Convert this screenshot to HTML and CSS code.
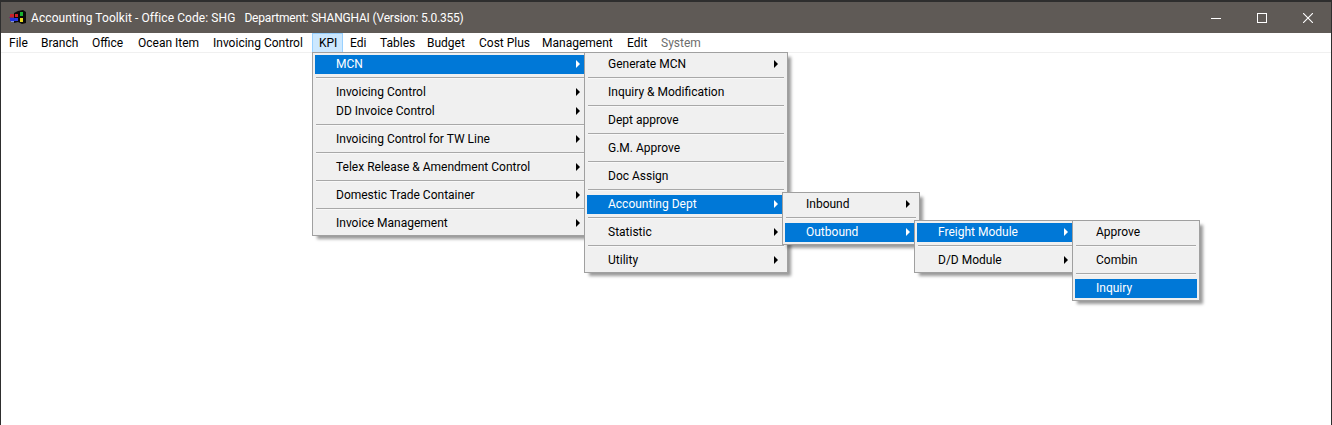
FILE: index.html
```html
<!DOCTYPE html>
<html>
    <head>
        <title>Accounting Toolkit</title>
        <meta name="viewport" content="width=device-width, initial-scale=1.0">
        <link rel="stylesheet" href="styles.css">
    </head>
    <body>
        <div id="app">
            <div id="titleBar">
                <svg class="appIcon" width="18" height="16" viewBox="0 0 18 16">
                    <path d="M5 4 L9 2 L14 1 L17 3 L17 14 L13 15 L9 13 L5 14 Z" fill="#0a0a0a"/>
                    <rect x="1" y="5" width="4" height="3" fill="#c8202a"/>
                    <rect x="0" y="8" width="5" height="1" fill="#7a2a60"/>
                    <rect x="1" y="9" width="5" height="3" fill="#2030d8"/>
                    <rect x="2" y="12" width="3" height="1" fill="#8090e0"/>
                    <rect x="6" y="5" width="3" height="3" fill="#d02028"/>
                    <rect x="6" y="9" width="3" height="3" fill="#2838e0"/>
                    <rect x="11" y="3" width="3" height="4" fill="#18b030"/>
                    <rect x="11" y="9" width="3" height="4" fill="#e8d820"/>
                </svg>
                <span class="titleOffice">Accounting Toolkit - Office Code: SHG</span>
                <span class="titleDept">Department: SHANGHAI (Version: 5.0.355)</span>
                <div class="winBtns">
                    <span class="winBtn">
                        <svg width="10" height="10" viewBox="0 0 10 10"><rect x="0" y="5" width="10" height="1" fill="#fff"/></svg>
                    </span>
                    <span class="winBtn">
                        <svg width="10" height="10" viewBox="0 0 10 10"><rect x="0.5" y="0.5" width="9" height="9" fill="none" stroke="#fff"/></svg>
                    </span>
                    <span class="winBtn">
                        <svg width="10" height="10" viewBox="0 0 10 10"><path d="M0 0 L10 10 M10 0 L0 10" stroke="#fff" stroke-width="1.1"/></svg>
                    </span>
                </div>
            </div>

            <div id="menuBar">
                <span class="barItem">File</span>
                <span class="barItem">Branch</span>
                <span class="barItem">Office</span>
                <span class="barItem">Ocean Item</span>
                <span class="barItem">Invoicing Control</span>
                <span class="barItem open">KPI</span>
                <span class="barItem">Edi</span>
                <span class="barItem">Tables</span>
                <span class="barItem">Budget</span>
                <span class="barItem">Cost Plus</span>
                <span class="barItem">Management</span>
                <span class="barItem">Edit</span>
                <span class="barItem off">System</span>
            </div>

            <!-- cascading popups, each one placed where its parent opened it -->
            <div class="popup" id="kpiMenu">
                <div class="item sel sub">MCN</div>
                <div class="sep"></div>
                <div class="item sub">Invoicing Control</div>
                <div class="item sub">DD Invoice Control</div>
                <div class="sep"></div>
                <div class="item sub">Invoicing Control for TW Line</div>
                <div class="sep"></div>
                <div class="item sub">Telex Release &amp; Amendment Control</div>
                <div class="sep"></div>
                <div class="item sub">Domestic Trade Container</div>
                <div class="sep"></div>
                <div class="item sub">Invoice Management</div>
            </div>

            <div class="popup" id="mcnMenu">
                <div class="item sub">Generate MCN</div>
                <div class="sep"></div>
                <div class="item">Inquiry &amp; Modification</div>
                <div class="sep"></div>
                <div class="item">Dept approve</div>
                <div class="sep"></div>
                <div class="item">G.M. Approve</div>
                <div class="sep"></div>
                <div class="item">Doc Assign</div>
                <div class="sep"></div>
                <div class="item sel sub">Accounting Dept</div>
                <div class="sep"></div>
                <div class="item sub">Statistic</div>
                <div class="sep"></div>
                <div class="item sub">Utility</div>
            </div>

            <div class="popup" id="acctMenu">
                <div class="item sub">Inbound</div>
                <div class="sep"></div>
                <div class="item sel sub">Outbound</div>
            </div>

            <div class="popup" id="outMenu">
                <div class="item sel sub">Freight Module</div>
                <div class="sep"></div>
                <div class="item sub">D/D Module</div>
            </div>

            <div class="popup" id="freightMenu">
                <div class="item">Approve</div>
                <div class="sep"></div>
                <div class="item">Combin</div>
                <div class="sep"></div>
                <div class="item sel">Inquiry</div>
            </div>
        </div>
    </body>
</html>
```

FILE: styles.css
```css
*{
    margin: 0;
    padding: 0;
    box-sizing: border-box;
}

body{
    width: 100vw;
    height: 100vh;
    overflow: hidden;
    background-color: #2e2e2e;
    font-family: Roboto, "Noto Sans", sans-serif;
    font-size: 12px;
    color: #000;
}

#app{
    position: relative;
    height: 100%;
    margin: 2px 1px 0 1px;
    background-color: #fff;
    display: flex;
    flex-direction: column;
}

#titleBar{
    height: 31px;
    display: flex;
    align-items: center;
    padding-left: 8px;
    background-color: #5f5a56;
    color: #fff;
}

.appIcon{
    margin-right: 4px;
    margin-top: -1px;
}

.titleOffice{
    letter-spacing: 0.08px;
    white-space: nowrap;
}

.titleDept{
    flex: 1;
    margin-left: 9px;
    letter-spacing: -0.2px;
    white-space: nowrap;
}

.winBtns{
    display: flex;
    height: 100%;
}

.winBtn{
    width: 46px;
    display: flex;
    align-items: center;
    justify-content: center;
}

/* native menu bar has its own item widths, so fix them as columns */
#menuBar{
    height: 19px;
    display: grid;
    grid-template-columns: 32px 51px 46px 75px 106px 31px 30px 47px 52px 63px 85px 34px auto;
    justify-content: start;
    padding-left: 1px;
    background-color: #fff;
    border-bottom: 1px solid #f0f0f0;
    box-sizing: content-box;
}

.barItem{
    padding-left: 7px;
    line-height: 20px;
    white-space: nowrap;
}

.barItem.open{
    background-color: #cce8ff;
    box-shadow: inset 0 0 0 1px #99d1ff;
}

.barItem.off{
    color: #6d6d6d;
}

.popup{
    position: absolute;
    display: flex;
    flex-direction: column;
    padding: 2px;
    background-color: #f0f0f0;
    border: 1px solid #a0a0a0;
    box-shadow: 4px 4px 3px -1px rgba(0, 0, 0, 0.4);
}

#kpiMenu{
    left: 311px;
    top: 50px;
    width: 278px;
    height: 184px;
}

#mcnMenu{
    left: 583px;
    top: 50px;
    width: 204px;
    height: 221px;
}

#acctMenu{
    left: 781px;
    top: 190px;
    width: 138px;
    height: 53px;
}

#outMenu{
    left: 913px;
    top: 218px;
    width: 164px;
    height: 53px;
}

#freightMenu{
    left: 1071px;
    top: 218px;
    width: 128px;
    height: 81px;
}

.item{
    position: relative;
    height: 19px;
    line-height: 18px;
    padding-left: 21px;
    white-space: nowrap;
}

.item.sel{
    background-color: #0078d7;
    color: #fff;
}

/* the little submenu triangle */
.item.sub::after{
    content: "";
    position: absolute;
    right: 7px;
    top: 5px;
    width: 4px;
    height: 8px;
    background-color: #000;
    clip-path: polygon(0 0, 100% 50%, 0 100%);
}

.item.sel.sub::after{
    background-color: #fff;
}

.sep{
    height: 9px;
    margin: 0 1px;
    padding-top: 3px;
}

.sep::after{
    content: "";
    display: block;
    height: 1px;
    background-color: #a8a8a8;
    box-shadow: 0 1px 0 #f8f8f8;
}
```
